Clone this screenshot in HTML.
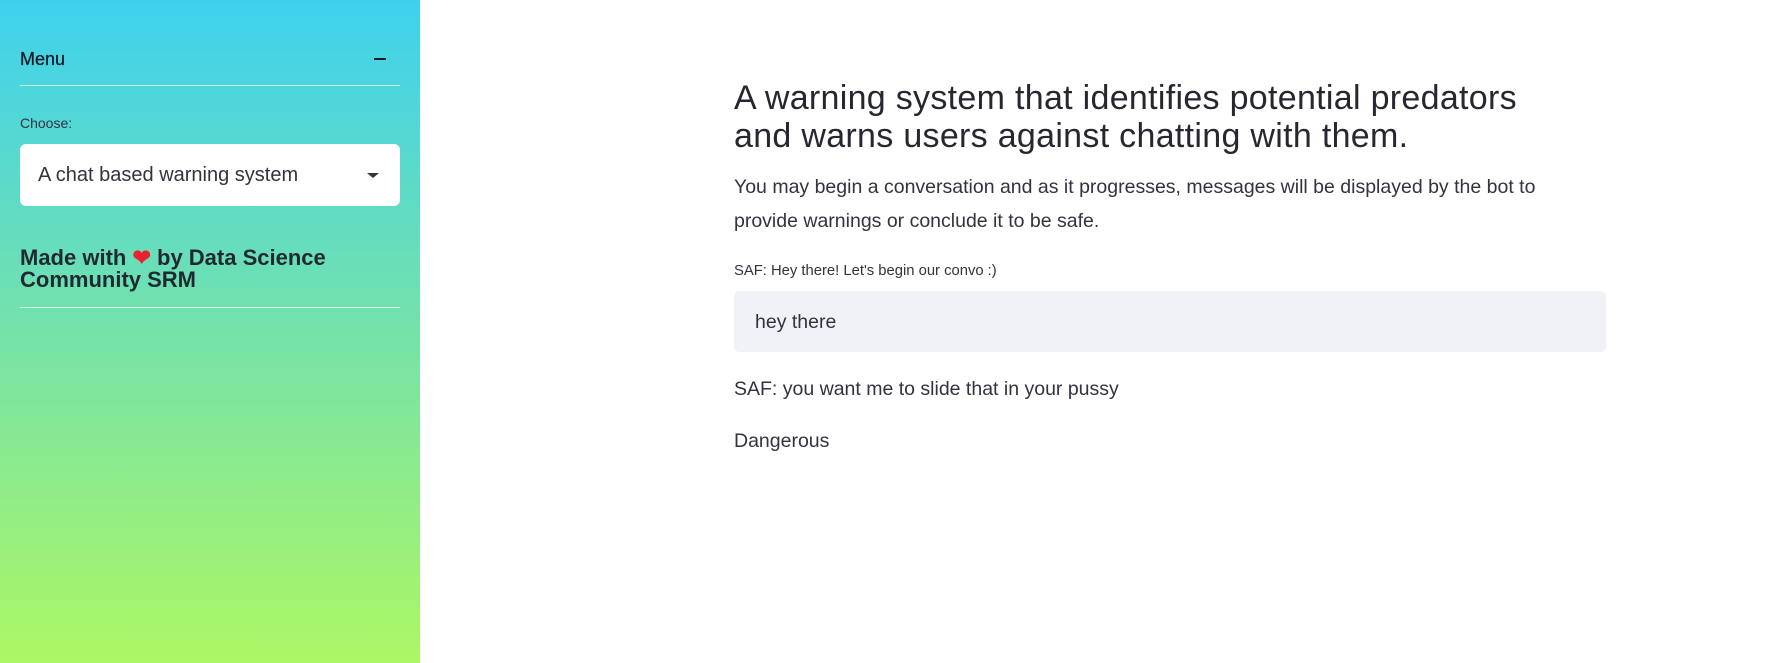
<!DOCTYPE html>
<html><head><meta charset="utf-8"><style>
*{margin:0;padding:0;box-sizing:border-box}
body{width:1775px;height:663px;overflow:hidden;background:#fff;font-family:"Liberation Sans",sans-serif;color:#262730;position:relative}
.sb{position:absolute;left:0;top:0;width:420px;height:663px;background:linear-gradient(180deg,#3ed1ef 0%,#6fe0b0 45%,#acf764 100%)}
.abs{position:absolute;white-space:nowrap}
.hr{position:absolute;left:20px;width:380px;height:1px;background:rgba(255,255,255,.75)}
</style></head><body>
<div class="sb">
  <div class="abs" style="left:20px;top:49px;font-size:18px;color:#1a1c24;-webkit-text-stroke:0.3px #1a1c24">Menu</div>
  <div class="abs" style="left:374px;top:58px;width:12px;height:2px;background:#1a1c24"></div>
  <div class="hr" style="top:85px"></div>
  <div class="abs" style="left:20px;top:115px;font-size:14px;color:#31333f">Choose:</div>
  <div class="abs" style="left:20px;top:144px;width:380px;height:62px;background:#fff;border-radius:6px"></div>
  <div class="abs" style="left:38px;top:164px;font-size:20px;color:#31333f">A chat based warning system</div>
  <div class="abs" style="left:367px;top:173px;width:0;height:0;border-left:6px solid transparent;border-right:6px solid transparent;border-top:5px solid #31333f"></div>
  <div class="abs" style="left:20px;top:247px;font-size:22px;font-weight:bold;line-height:22px;color:#1f2a30">Made with <span style="color:#e8232f">❤</span> by Data Science<br>Community SRM</div>
  <div class="hr" style="top:307px"></div>
</div>
<div class="abs" style="left:734px;top:79px;font-size:34px;letter-spacing:0.3px;line-height:38px;color:#262730">A warning system that identifies potential predators<br>and warns users against chatting with them.</div>
<div class="abs" style="left:734px;top:170px;font-size:19.5px;line-height:34px;color:#31333f">You may begin a conversation and as it progresses, messages will be displayed by the bot to<br>provide warnings or conclude it to be safe.</div>
<div class="abs" style="left:734px;top:263px;font-size:14.8px;color:#31333f">SAF: Hey there! Let's begin our convo :)</div>
<div class="abs" style="left:734px;top:291px;width:872px;height:61px;background:#f0f2f6;border-radius:5px"></div>
<div class="abs" style="left:755px;top:311px;font-size:19.5px;color:#31333f">hey there</div>
<div class="abs" style="left:734px;top:378px;font-size:19.5px;color:#31333f">SAF: you want me to slide that in your pussy</div>
<div class="abs" style="left:734px;top:430px;font-size:19.5px;color:#31333f">Dangerous</div>
</body></html>
